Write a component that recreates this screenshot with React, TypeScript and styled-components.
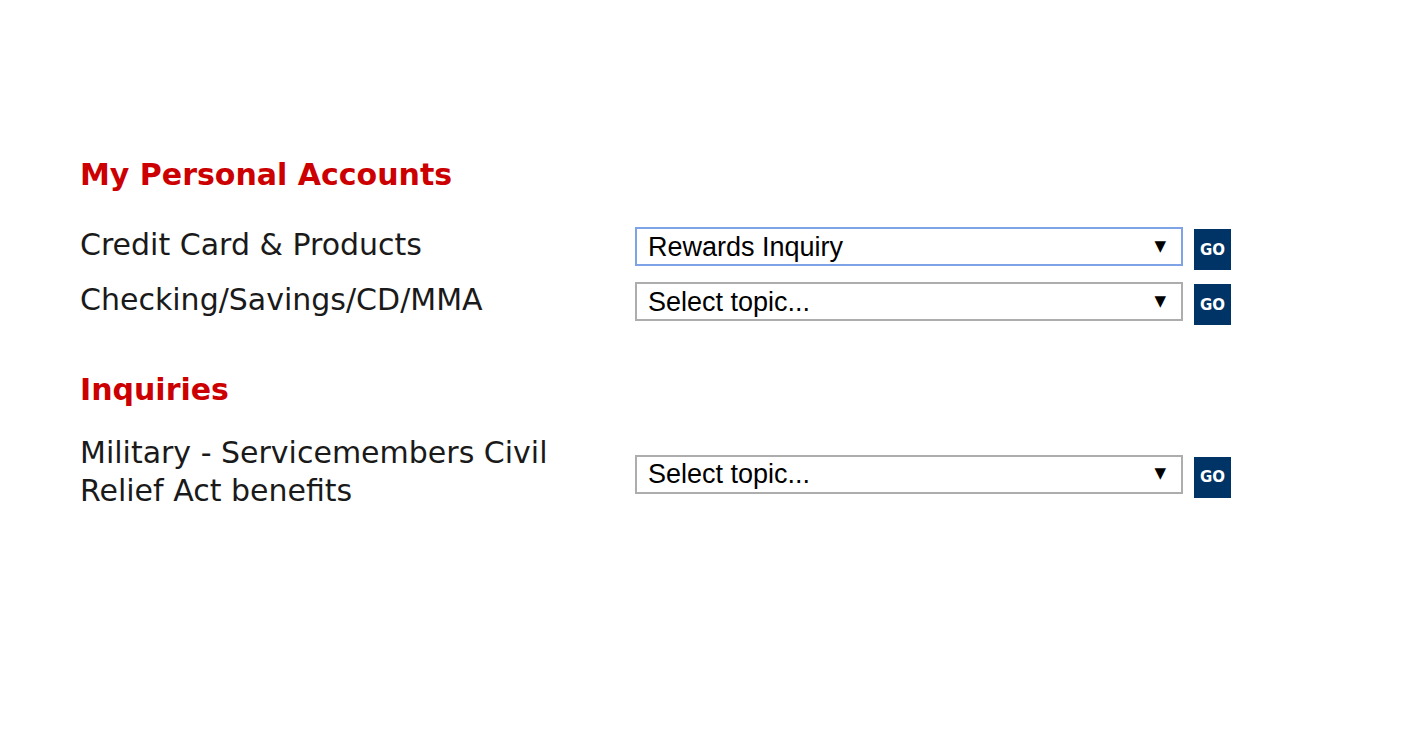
import styled, { createGlobalStyle } from "styled-components";

const GlobalStyle = createGlobalStyle`
  html, body {
    margin: 0;
    padding: 0;
    background: #ffffff;
  }
  body {
    font-family: "DejaVu Sans", Verdana, sans-serif;
    color: #1a1a1a;
  }
`;

const Page = styled.div`
  width: 1408px;
  height: 742px;
  box-sizing: border-box;
  padding: 157px 0 0 80px;
`;

const Section = styled.section`
  margin-bottom: 47px;
`;

const Heading = styled.h2`
  margin: 0 0 26px;
  font-size: 30px;
  line-height: 36px;
  font-weight: bold;
  color: #cc0000;
`;

const Rows = styled.div`
  display: grid;
  row-gap: 4px;
`;

const Row = styled.div`
  display: grid;
  grid-template-columns: 555px 596px;
  align-items: center;
`;

const Label = styled.div`
  font-size: 30px;
  line-height: 38px;
  color: #1a1a1a;
  max-width: 490px;
`;

const Control = styled.div`
  display: flex;
  align-items: flex-start;
  gap: 11px;
  padding-top: 8px;
`;

const SelectWrap = styled.div`
  position: relative;
  width: 548px;
  height: 39px;
`;

const Select = styled.select<{ $focused?: boolean }>`
  appearance: none;
  -webkit-appearance: none;
  width: 100%;
  height: 100%;
  box-sizing: border-box;
  margin: 0;
  padding: 0 40px 0 11px;
  border: 2px solid ${(p) => (p.$focused ? "#7ea3e6" : "#adadad")};
  border-radius: 0;
  background: #ffffff;
  font-family: "Liberation Sans", Arial, sans-serif;
  font-size: 27px;
  color: #000000;
  outline: none;
`;

const Arrow = styled.span`
  position: absolute;
  right: 17px;
  top: 50%;
  transform: translateY(-55%);
  font-family: "DejaVu Sans", sans-serif;
  font-size: 15px;
  color: #000000;
  pointer-events: none;
`;

const GoButton = styled.button`
  width: 37px;
  height: 41px;
  margin-top: 2px;
  padding: 0;
  border: none;
  background: #003366;
  color: #ffffff;
  font-family: "DejaVu Sans", Verdana, sans-serif;
  font-weight: bold;
  font-size: 15px;
  cursor: pointer;
`;

type Topic = { label: string; value: string; focused?: boolean };

const personal: Topic[] = [
  { label: "Credit Card & Products", value: "Rewards Inquiry", focused: true },
  { label: "Checking/Savings/CD/MMA", value: "Select topic..." },
];

const inquiries: Topic[] = [
  { label: "Military - Servicemembers Civil Relief Act benefits", value: "Select topic..." },
];

function TopicRow({ topic }: { topic: Topic }) {
  return (
    <Row>
      <Label>{topic.label}</Label>
      <Control>
        <SelectWrap>
          <Select $focused={topic.focused} defaultValue={topic.value}>
            <option>Select topic...</option>
            <option>Rewards Inquiry</option>
          </Select>
          <Arrow>▼</Arrow>
        </SelectWrap>
        <GoButton>GO</GoButton>
      </Control>
    </Row>
  );
}

export default function App() {
  return (
    <>
      <GlobalStyle />
      <Page>
        <Section>
          <Heading>My Personal Accounts</Heading>
          <Rows>
            {personal.map((t) => (
              <TopicRow key={t.label} topic={t} />
            ))}
          </Rows>
        </Section>
        <Section>
          <Heading>Inquiries</Heading>
          <Rows>
            {inquiries.map((t) => (
              <TopicRow key={t.label} topic={t} />
            ))}
          </Rows>
        </Section>
      </Page>
    </>
  );
}
